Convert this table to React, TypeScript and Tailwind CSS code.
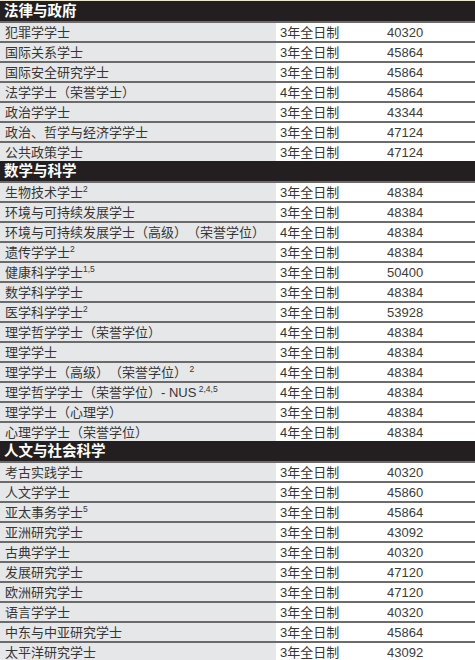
import React from "react";

type Row = { name: string; sup?: string; dur: string; fee: string };
type Section = { title: string; rows: Row[] };

const sections: Section[] = [
  {
    title: "法律与政府",
    rows: [
      { name: "犯罪学学士", dur: "3年全日制", fee: "40320" },
      { name: "国际关系学士", dur: "3年全日制", fee: "45864" },
      { name: "国际安全研究学士", dur: "3年全日制", fee: "45864" },
      { name: "法学学士（荣誉学士）", dur: "4年全日制", fee: "45864" },
      { name: "政治学学士", dur: "3年全日制", fee: "43344" },
      { name: "政治、哲学与经济学学士", dur: "3年全日制", fee: "47124" },
      { name: "公共政策学士", dur: "3年全日制", fee: "47124" },
    ],
  },
  {
    title: "数学与科学",
    rows: [
      { name: "生物技术学士", sup: "2", dur: "3年全日制", fee: "48384" },
      { name: "环境与可持续发展学士", dur: "3年全日制", fee: "48384" },
      { name: "环境与可持续发展学士（高级）（荣誉学位）", dur: "4年全日制", fee: "48384" },
      { name: "遗传学学士", sup: "2", dur: "3年全日制", fee: "48384" },
      { name: "健康科学学士", sup: "1,5", dur: "3年全日制", fee: "50400" },
      { name: "数学科学学士", dur: "3年全日制", fee: "48384" },
      { name: "医学科学学士", sup: "2", dur: "3年全日制", fee: "53928" },
      { name: "理学哲学学士（荣誉学位）", dur: "4年全日制", fee: "48384" },
      { name: "理学学士", dur: "3年全日制", fee: "48384" },
      { name: "理学学士（高级）（荣誉学位）", sup: " 2", dur: "4年全日制", fee: "48384" },
      { name: "理学哲学学士（荣誉学位）- NUS", sup: " 2,4,5", dur: "4年全日制", fee: "48384" },
      { name: "理学学士（心理学）", dur: "3年全日制", fee: "48384" },
      { name: "心理学学士（荣誉学位）", dur: "4年全日制", fee: "48384" },
    ],
  },
  {
    title: "人文与社会科学",
    rows: [
      { name: "考古实践学士", dur: "3年全日制", fee: "40320" },
      { name: "人文学学士", dur: "3年全日制", fee: "45860" },
      { name: "亚太事务学士", sup: "5", dur: "3年全日制", fee: "45864" },
      { name: "亚洲研究学士", dur: "3年全日制", fee: "43092" },
      { name: "古典学学士", dur: "3年全日制", fee: "40320" },
      { name: "发展研究学士", dur: "3年全日制", fee: "47120" },
      { name: "欧洲研究学士", dur: "3年全日制", fee: "47120" },
      { name: "语言学学士", dur: "3年全日制", fee: "40320" },
      { name: "中东与中亚研究学士", dur: "3年全日制", fee: "45864" },
      { name: "太平洋研究学士", dur: "3年全日制", fee: "43092" },
    ],
  },
];

const font = { fontFamily: '"Liberation Sans", "Noto Sans CJK SC", sans-serif' };

export default function App() {
  return (
    <div className="w-[475px] h-[660px] overflow-hidden bg-white [text-spacing-trim:space-all]" style={font}>
      <div className="h-px bg-[#efe8d6]" />
      {sections.map((s) => (
        <div key={s.title}>
          <div className="h-[20px] bg-[#231f20] flex items-center pl-[4px] text-white font-bold text-[14.5px] leading-none">
            {s.title}
          </div>
          {s.rows.map((r, i) => (
            <div
              key={i}
              className="h-[20px] border-t-2 border-[#6b6b6b] grid grid-cols-[276px_110px_1fr] text-[13px] leading-none text-[#363636]"
            >
              <div className="bg-[#e6e7e8] flex items-center pl-[5px] whitespace-nowrap">
                <span>{r.name}</span>
                {r.sup && (
                  <span className="text-[8.5px] leading-none self-start mt-[2px] whitespace-pre">{r.sup}</span>
                )}
              </div>
              <div className="flex items-center pl-[4px]">{r.dur}</div>
              <div className="flex items-center pl-[1px] text-[#3c3c3c]">{r.fee}</div>
            </div>
          ))}
        </div>
      ))}
    </div>
  );
}
